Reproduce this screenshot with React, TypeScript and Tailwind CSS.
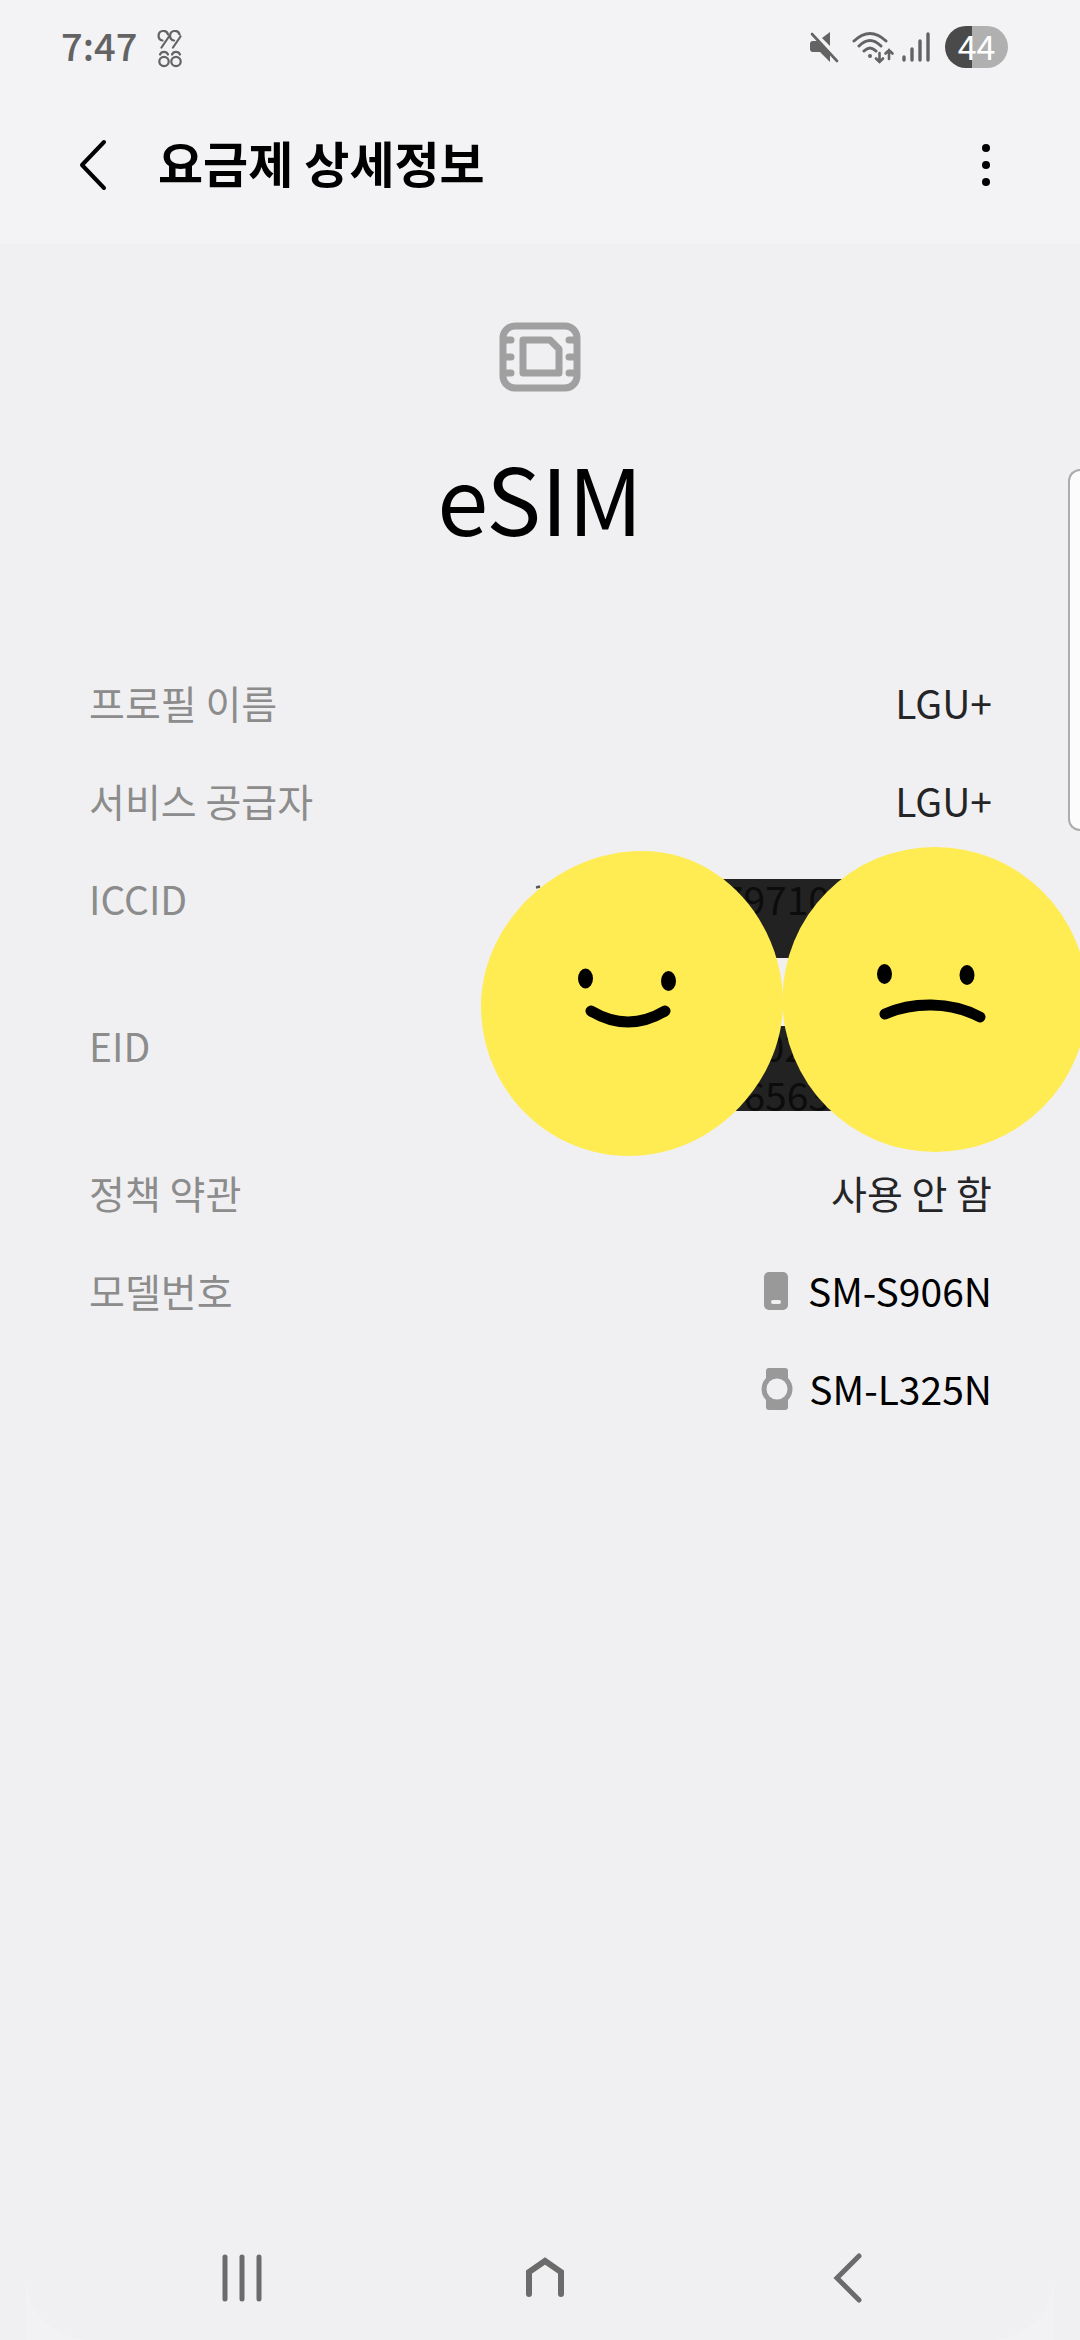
import type { ReactNode } from 'react'

function StatusBar() {
  return (
    <div className="flex h-24 items-center justify-between pr-18 pb-[2px] pl-[61px] text-[#636363]">
      <div className="flex items-center gap-5">
        <span className="pb-1 text-[38px] leading-[48px] font-medium">7:47</span>
        <svg className="mt-1" width="26" height="38" viewBox="0 0 26 38" fill="none" stroke="currentColor" strokeWidth="2.2" strokeLinecap="round" aria-hidden="true">
          <path d="M11 4.500A4.800 4.800 0 1 0 5.500 10.500M12 6.500 4.500 17.500M22.500 4.500A4.800 4.800 0 1 0 17 10.500M23.500 6.500 16 17.500" />
          <circle cx="7" cy="31.500" r="4.700" />
          <circle cx="19" cy="31.500" r="4.700" />
          <path d="M3 24.500A4.300 4.300 0 0 1 11 24.500M15 24.500A4.300 4.300 0 0 1 23 24.500" />
        </svg>
      </div>

      <div className="flex items-center">
        <svg width="30" height="32" viewBox="0 0 30 32" fill="currentColor" aria-hidden="true">
          <path d="M21 1v14L13 7zM4 10h4l13 13v8L11 21H4a3 3 0 0 1-3-3v-5a3 3 0 0 1 3-3z" />
          <path d="M3 3 28 30" stroke="currentColor" strokeWidth="2.600" strokeLinecap="round" />
        </svg>
        <svg className="ml-3" width="44" height="34" viewBox="0 0 44 34" fill="none" stroke="currentColor" strokeWidth="3" strokeLinecap="round" aria-hidden="true">
          <path d="M3 11Q19-4 35 11M8 16Q19 5 30 16M13 21Q19 15 25 21" />
          <circle cx="19" cy="26" r="2" fill="currentColor" stroke="none" />
          <path d="M28.500 23v9M25 28.500l3.500 3.500 3.500-3.500M38 29v-9M34.500 23.500 38 20l3.500 3.500" strokeWidth="2.600" />
        </svg>
        <svg className="mr-[2px] ml-[6px]" width="30" height="32" viewBox="0 0 30 32" fill="none" stroke="currentColor" strokeWidth="3.400" strokeLinecap="round" aria-hidden="true">
          <path d="M3 26v3M11 18v11M19 10v19M27 3v26" />
        </svg>
        <span className="ml-3 flex h-[42px] w-[63px] items-center justify-center rounded-full bg-linear-to-r from-[#4a4a4a] from-43% to-[#b0b0b1] to-43% pb-1 text-[34px] text-white">
          44
        </span>
      </div>
    </div>
  )
}

function Header() {
  return (
    <header className="flex h-[148px] items-center pr-[70px] pb-[10px] pl-[65px]">
      <button type="button" aria-label="뒤로" className="flex h-20 w-14 items-center justify-center">
        <svg width="28" height="52" viewBox="0 0 28 52" fill="none" stroke="#000" strokeWidth="4" strokeLinecap="round" strokeLinejoin="round">
          <path d="M25 3 3 26l22 23" />
        </svg>
      </button>
      <h1 className="ml-[37px] flex-1 pb-[6px] text-[49px] leading-[72px] font-bold text-black">요금제 상세정보</h1>
      <button type="button" aria-label="더보기" className="flex h-20 w-12 items-center justify-center">
        <svg width="8" height="42" viewBox="0 0 8 42">
          <circle cx="4" cy="4" r="4" />
          <circle cx="4" cy="21" r="4" />
          <circle cx="4" cy="38" r="4" />
        </svg>
      </button>
    </header>
  )
}

function Row({ label, children }: { label: string; children: ReactNode }) {
  return (
    <div className="flex justify-between">
      <dt className="text-[#8c8c8c]">{label}</dt>
      <dd className="text-[#252527]">{children}</dd>
    </div>
  )
}

function Stickers() {
  return (
    <svg className="absolute top-[168px] right-0 z-20" width="600" height="312" viewBox="480 846 600 312" fill="none" aria-hidden="true">
      <path d="M536 887.500l4-1" stroke="#555" strokeWidth="2.500" />
      <path d="M642 851C724 851 783 925 783 1003S714 1156 630 1156 481 1088 481 1006 556 851 642 851z" fill="#ffeb52" />
      <ellipse cx="935" cy="999.500" rx="152.500" ry="152.500" fill="#ffeb52" />
      <g fill="#000">
        <ellipse cx="585.500" cy="978.500" rx="7.500" ry="10" />
        <ellipse cx="668.500" cy="981" rx="7.500" ry="10" />
        <ellipse cx="884.500" cy="974" rx="7.500" ry="10" />
        <ellipse cx="967" cy="975" rx="7.500" ry="10" />
      </g>
      <g stroke="#000" strokeWidth="11" strokeLinecap="round">
        <path d="M591 1011Q628 1033 665 1011" />
        <path d="M885 1014C912 1002 950 1001 980 1017" />
      </g>
    </svg>
  )
}

function PhoneIcon() {
  return (
    <svg width="32" height="42" viewBox="0 0 32 42" aria-hidden="true">
      <rect x="4" y="2" width="24" height="38" rx="5" fill="#999" />
      <rect x="11" y="30" width="10" height="4" rx="2" fill="#f0f0f2" />
    </svg>
  )
}

function WatchIcon() {
  return (
    <svg width="32" height="42" viewBox="0 0 32 42" aria-hidden="true">
      <rect x="5" y="0" width="22" height="42" rx="3" fill="#999" />
      <circle cx="16" cy="21" r="15.500" fill="#999" />
      <circle cx="16" cy="21" r="10.500" fill="#f0f0f2" />
    </svg>
  )
}

export default function App() {
  return (
    <div className="flex min-h-screen flex-col overflow-hidden bg-[#f0f0f2] font-['Noto_Sans_CJK_KR',sans-serif]">
      <div className="bg-[#f3f3f5]">
        <StatusBar />
        <Header />
      </div>

      <main className="relative flex-1">
        <div className="flex flex-col items-center pt-[78px]">
          <svg width="82" height="70" viewBox="0 0 82 70" fill="none" stroke="#a0a0a0" strokeWidth="7" strokeLinecap="round" strokeLinejoin="round" aria-hidden="true">
            <rect x="4" y="4" width="74" height="62" rx="12" />
            <path d="M24 18h27l9 9v24H24zM7 18h5M7 35h5M7 51h5M75 18h-5M75 35h-5M75 51h-5" />
          </svg>
          <h2 className="mt-9 text-[92px] leading-[136px] text-black">eSIM</h2>
        </div>

        <dl className="relative mt-[114px] flex flex-col gap-[49px] pr-[88px] pl-[89px] text-[39px] leading-[49px]">
          <Row label="프로필 이름">LGU+</Row>
          <Row label="서비스 공급자">LGU+</Row>
          <Row label="ICCID">
            <span className="relative z-10 block h-[98px] pr-[162px] text-[#0c0c0c]">79710</span>
          </Row>
          <Row label="EID">
            <span className="relative z-10 flex flex-col items-end pr-[162px] text-[#0c0c0c]">
              <span className="pr-6">02</span>
              <span>6563</span>
            </span>
          </Row>
          <Row label="정책 약관">사용 안 함</Row>
          <Row label="모델번호">
            <span className="flex flex-col gap-[49px] text-black">
              <span className="flex items-center justify-end gap-4">
                <PhoneIcon />
                SM-S906N
              </span>
              <span className="flex items-center justify-end gap-4">
                <WatchIcon />
                SM-L325N
              </span>
            </span>
          </Row>
          <div className="absolute top-[201px] right-[180px] h-[79px] w-[240px] bg-[#222]" />
          <div className="absolute top-[348px] right-[180px] h-[85px] w-[240px] bg-[#222]" />
          <Stickers />
        </dl>

        <div className="absolute top-[225px] right-0 h-[362px] w-3 rounded-l-xl border-2 border-r-0 border-[#acacac] bg-[#fcfcfc]" />
      </main>

      <nav className="relative flex h-[124px] items-center justify-between pr-[192px] pl-[202px] text-[#6b6b6b]">
        <button type="button" aria-label="최근 앱" className="flex w-20 justify-center">
          <svg width="40" height="48" viewBox="0 0 40 48" stroke="currentColor" strokeWidth="5" strokeLinecap="round">
            <path d="M3 3v42M20 3v42M37 3v42" />
          </svg>
        </button>
        <button type="button" aria-label="홈" className="flex w-20 justify-center">
          <svg width="40" height="42" viewBox="0 0 40 42" fill="none" stroke="currentColor" strokeWidth="6" strokeLinecap="round">
            <path d="M4 37V15L20 4l16 11v22" />
          </svg>
        </button>
        <button type="button" aria-label="이전" className="flex w-20 justify-center">
          <svg width="30" height="50" viewBox="0 0 30 50" fill="none" stroke="currentColor" strokeWidth="5" strokeLinecap="round">
            <path d="M26 3 4 25l22 22" />
          </svg>
        </button>
        <svg className="absolute bottom-0 left-[26px]" width="60" height="60" viewBox="0 0 60 60" fill="#f2f2f4" aria-hidden="true">
          <path d="M0 0Q6 52 60 60H0z" />
        </svg>
        <svg className="absolute right-[26px] bottom-0" width="60" height="60" viewBox="0 0 60 60" fill="#f2f2f4" aria-hidden="true">
          <path d="M60 0Q54 52 0 60h60z" />
        </svg>
      </nav>
    </div>
  )
}
